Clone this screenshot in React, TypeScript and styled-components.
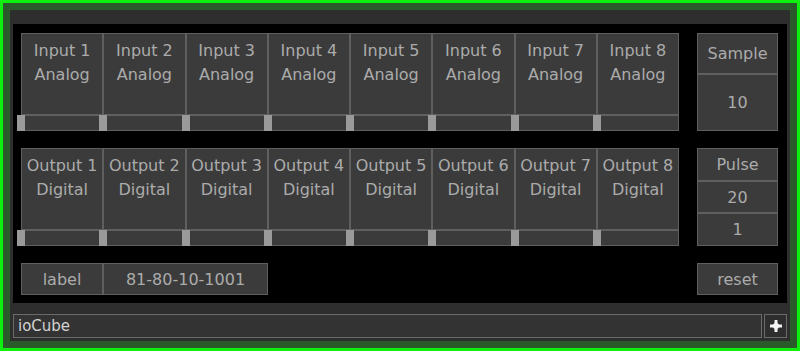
import React from 'react';
import styled, { createGlobalStyle } from 'styled-components';

const GlobalStyle = createGlobalStyle`
  html, body {
    margin: 0;
    padding: 0;
    background: #000;
  }
  * {
    box-sizing: border-box;
  }
`;

const Frame = styled.div`
  width: 800px;
  height: 351px;
  border: 3px solid #10f010;
  background: #2b5a2b;
  padding: 7px;
  font-family: 'DejaVu Sans', Verdana, sans-serif;
`;

const Inner = styled.div`
  height: 100%;
  background: #2e2e2e;
  padding: 14px 3px 3px;
  display: flex;
  flex-direction: column;
  gap: 11px;
`;

const Panel = styled.div`
  height: 279px;
  background: #000;
  padding: 9px 9px 8px 8px;
  display: grid;
  grid-template-columns: 658px 81px;
  grid-template-rows: 98px 98px 32px;
  column-gap: 18px;
  row-gap: 17px;
`;

const ChannelGrid = styled.div`
  display: grid;
  grid-template-columns: repeat(8, 1fr);
`;

const Channel = styled.div`
  display: flex;
  flex-direction: column;
`;

const ChannelLabel = styled.div`
  flex: 1;
  background: #3b3b3b;
  border: 1px solid #5f5f5f;
  padding-top: 5px;
  color: #ababab;
  font-size: 16px;
  line-height: 24px;
  text-align: center;
  white-space: nowrap;
`;

const Bar = styled.div`
  position: relative;
  height: 16px;
  background: #3b3b3b;
  border: 1px solid #5f5f5f;
`;

const Knob = styled.div`
  position: absolute;
  top: -1px;
  bottom: -1px;
  left: -5px;
  width: 8px;
  background: #9a9a9a;
`;

const SideStack = styled.div`
  display: flex;
  flex-direction: column;
`;

const Box = styled.div<{ $height?: number }>`
  flex: ${p => (p.$height ? `0 0 ${p.$height}px` : '1')};
  display: flex;
  align-items: center;
  justify-content: center;
  background: #3b3b3b;
  border: 1px solid #5f5f5f;
  color: #ababab;
  font-size: 16px;
  white-space: nowrap;
`;

const InfoRow = styled.div`
  display: grid;
  grid-template-columns: 82px 165px;
`;

const BottomBar = styled.div`
  height: 24px;
  display: flex;
  gap: 2px;
`;

const NameField = styled.div`
  flex: 1;
  background: #333;
  border: 1px solid #6a6a6a;
  color: #d2d2d2;
  font-size: 15px;
  line-height: 22px;
  padding-left: 4px;
`;

const PlusButton = styled.div`
  width: 23px;
  display: flex;
  align-items: center;
  justify-content: center;
  background: #2e2e2e;
  border: 1px solid #6a6a6a;
`;

const inputs = [1, 2, 3, 4, 5, 6, 7, 8].map(n => ({ name: `Input ${n}`, kind: 'Analog' }));
const outputs = [1, 2, 3, 4, 5, 6, 7, 8].map(n => ({ name: `Output ${n}`, kind: 'Digital' }));

const ChannelRow: React.FC<{ items: { name: string; kind: string }[] }> = ({ items }) => (
  <ChannelGrid>
    {items.map(ch => (
      <Channel key={ch.name}>
        <ChannelLabel>
          {ch.name}
          <br />
          {ch.kind}
        </ChannelLabel>
        <Bar>
          <Knob />
        </Bar>
      </Channel>
    ))}
  </ChannelGrid>
);

const App: React.FC = () => (
  <>
    <GlobalStyle />
    <Frame>
      <Inner>
        <Panel>
          <ChannelRow items={inputs} />
          <SideStack>
            <Box $height={41}>Sample</Box>
            <Box>10</Box>
          </SideStack>

          <ChannelRow items={outputs} />
          <SideStack>
            <Box>Pulse</Box>
            <Box>20</Box>
            <Box>1</Box>
          </SideStack>

          <InfoRow>
            <Box>label</Box>
            <Box>81-80-10-1001</Box>
          </InfoRow>
          <SideStack>
            <Box>reset</Box>
          </SideStack>
        </Panel>

        <BottomBar>
          <NameField>ioCube</NameField>
          <PlusButton>
            <svg width="14" height="14" viewBox="0 0 14 14">
              <path
                d="M5.5 1 H8.5 V4.5 L9.5 5.5 H13 V8.5 H9.5 L8.5 9.5 V13 H5.5 V9.5 L4.5 8.5 H1 V5.5 H4.5 L5.5 4.5 Z"
                fill="#f4f4f4"
              />
              <circle cx="7" cy="7" r="3" fill="#f4f4f4" />
            </svg>
          </PlusButton>
        </BottomBar>
      </Inner>
    </Frame>
  </>
);

export default App;
